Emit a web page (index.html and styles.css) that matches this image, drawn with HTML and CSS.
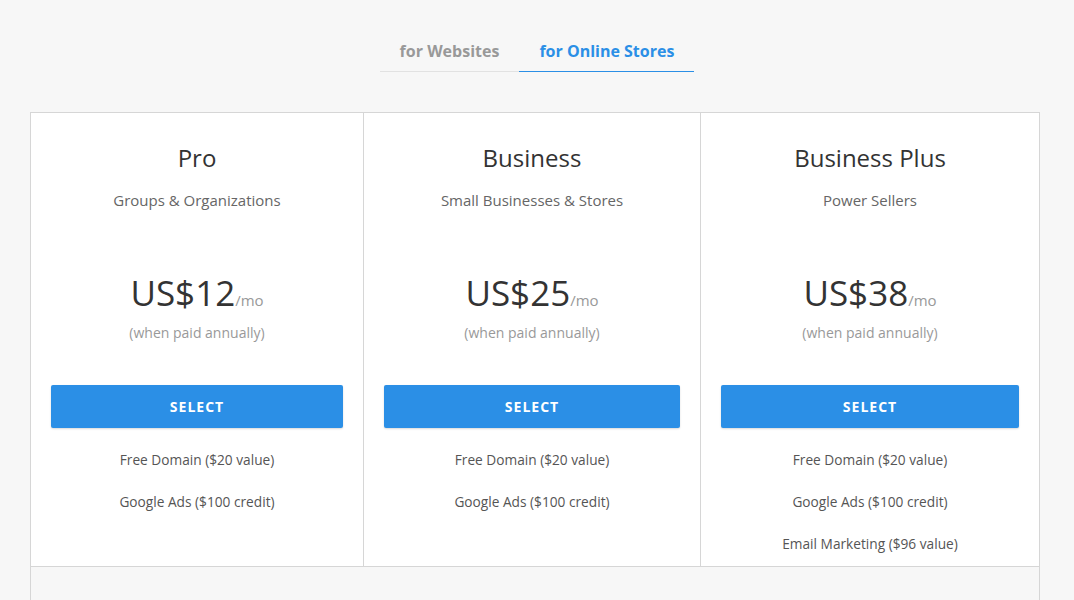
FILE: index.html
```html
<!DOCTYPE html>
<html lang="en">
<head>
<meta charset="utf-8">
<title>Pricing</title>
<link rel="stylesheet" href="styles.css">
</head>
<body>
<div class="page">
  <nav class="tabs">
    <div class="tab">for Websites</div>
    <div class="tab active">for Online Stores</div>
  </nav>
  <section class="pricing">
    <div class="plans">
      <div class="plan">
        <h2 class="plan-title">Pro</h2>
        <p class="plan-sub">Groups &amp; Organizations</p>
        <div class="price"><span class="amount">US$12</span><span class="per">/mo</span></div>
        <p class="annual">(when paid annually)</p>
        <button class="select">SELECT</button>
        <ul class="features">
          <li>Free Domain ($20 value)</li>
          <li>Google Ads ($100 credit)</li>
        </ul>
      </div>
      <div class="plan">
        <h2 class="plan-title">Business</h2>
        <p class="plan-sub">Small Businesses &amp; Stores</p>
        <div class="price"><span class="amount">US$25</span><span class="per">/mo</span></div>
        <p class="annual">(when paid annually)</p>
        <button class="select">SELECT</button>
        <ul class="features">
          <li>Free Domain ($20 value)</li>
          <li>Google Ads ($100 credit)</li>
        </ul>
      </div>
      <div class="plan">
        <h2 class="plan-title">Business Plus</h2>
        <p class="plan-sub">Power Sellers</p>
        <div class="price"><span class="amount">US$38</span><span class="per">/mo</span></div>
        <p class="annual">(when paid annually)</p>
        <button class="select">SELECT</button>
        <ul class="features">
          <li>Free Domain ($20 value)</li>
          <li>Google Ads ($100 credit)</li>
          <li>Email Marketing ($96 value)</li>
        </ul>
      </div>
    </div>
    <div class="pricing-foot"></div>
  </section>
</div>
</body>
</html>
```

FILE: styles.css
```css
* { box-sizing: border-box; }
html, body {
  margin: 0;
  padding: 0;
  background: #f7f7f7;
  font-family: "Open Sans", "Noto Sans", sans-serif;
  color: #333;
}
.page {
  padding: 36px 34px 0 30px;
}
.tabs {
  display: flex;
  justify-content: center;
  margin-left: 4px;
}
.tab {
  font-size: 16px;
  font-weight: 700;
  color: #999;
  line-height: 22px;
  padding: 4px 20px 9px;
  border-bottom: 1px solid #e2e2e2;
}
.tab.active {
  color: #2b8fe6;
  border-bottom-color: #2b8fe6;
}
.pricing {
  margin-top: 40px;
  border: 1px solid #d6d6d6;
  border-bottom: none;
}
.plans {
  display: grid;
  grid-template-columns: 332px 337px 1fr;
  background: #fff;
  border-bottom: 1px solid #d6d6d6;
}
.plan {
  text-align: center;
  padding: 29px 20px 1px;
  border-left: 1px solid #d6d6d6;
}
.plan:first-child { border-left: none; }
.plan-title {
  margin: 0;
  font-size: 24px;
  font-weight: 400;
  line-height: 32px;
  color: #333;
}
.plan-sub {
  margin: 16px 0 0;
  font-size: 15px;
  line-height: 20px;
  color: #666;
}
.price {
  display: flex;
  justify-content: center;
  align-items: baseline;
  height: 40px;
  margin-top: 63px;
}
.amount {
  font-size: 35px;
  line-height: 40px;
  color: #333;
}
.per {
  font-size: 15px;
  line-height: 20px;
  color: #999;
}
.annual {
  margin: 10px 0 0;
  font-size: 14px;
  line-height: 20px;
  color: #999;
}
.select {
  display: block;
  width: 100%;
  height: 43px;
  margin-top: 42px;
  border: none;
  border-radius: 2px;
  background: #2b8fe6;
  color: #fff;
  font-family: inherit;
  font-size: 14px;
  font-weight: 700;
  letter-spacing: 1px;
  box-shadow: 0 1px 2px rgba(0,0,0,0.15);
}
.features {
  list-style: none;
  margin: 11px 0 0;
  padding: 0;
}
.features li {
  font-size: 13.7px;
  line-height: 20px;
  padding: 11px 0;
  color: #555;
}
.pricing-foot {
  height: 40px;
}
```
